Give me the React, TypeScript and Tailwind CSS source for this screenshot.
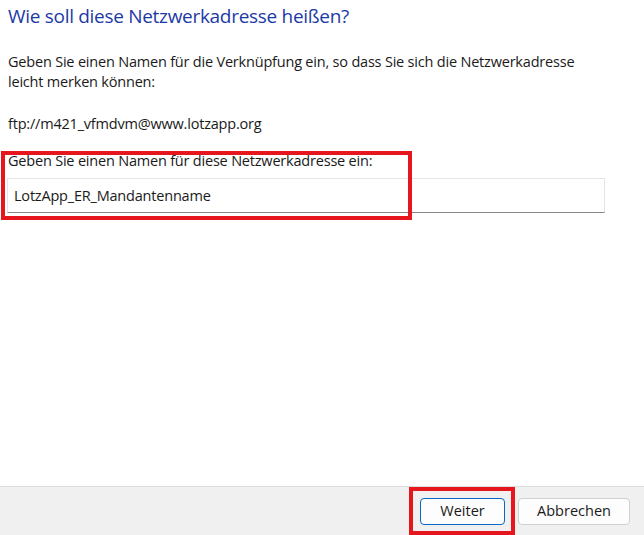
import React from "react";

export default function App() {
  return (
    <div
      className="relative w-[644px] h-[535px] bg-white flex flex-col overflow-hidden text-[#1a1a1a]"
      style={{ fontFamily: '"Segoe UI", "Open Sans", "Noto Sans", sans-serif' }}
    >
      <div className="flex-1 flex flex-col px-[8px]">
        <h1 className="mt-[3px] text-[19px] leading-[26px] text-[#1c3aa6] font-normal tracking-[-0.3px]">
          Wie soll diese Netzwerkadresse heißen?
        </h1>
        <p className="mt-[23px] text-[14.5px] leading-[20px] tracking-[-0.2px]">
          Geben Sie einen Namen für die Verknüpfung ein, so dass Sie sich die Netzwerkadresse
          <br />
          leicht merken können:
        </p>
        <p className="mt-[22px] text-[14.5px] leading-[20px] tracking-[-0.2px]">
          ftp://m421_vfmdvm@www.lotzapp.org
        </p>
        <label className="mt-[17px] text-[14.5px] leading-[20px] whitespace-nowrap tracking-[-0.2px]">
          Geben Sie einen Namen für diese Netzwerkadresse ein:
        </label>
        <div className="mt-[7px] -ml-[1px] w-[598px] h-[35px] border border-[#e5e5e5] border-b-[#878787] bg-white flex items-center pl-[6px] text-[14.5px] tracking-[-0.2px]">
          LotzApp_ER_Mandantenname
        </div>
      </div>
      <div className="h-[49px] border-t border-[#dcdcdc] bg-[#f0f0f0] flex justify-end items-start pt-[11px] pr-[14px] gap-[13px]">
        <button className="w-[85px] h-[27px] rounded-[4px] border border-[#0a67c2] bg-[#fdfdfd] text-[14.5px] leading-none text-[#1a1a1a]">
          Weiter
        </button>
        <button className="w-[112px] h-[27px] rounded-[4px] border border-[#d0d0d0] bg-[#fdfdfd] text-[14.5px] leading-none text-[#1a1a1a]">
          Abbrechen
        </button>
      </div>
      <div className="absolute left-[1px] top-[151px] w-[411px] h-[69px] border-[4px] border-[#e5161d] pointer-events-none" />
      <div className="absolute left-[409px] top-[487px] w-[106px] h-[48px] border-[4px] border-[#e5161d] pointer-events-none" />
    </div>
  );
}
